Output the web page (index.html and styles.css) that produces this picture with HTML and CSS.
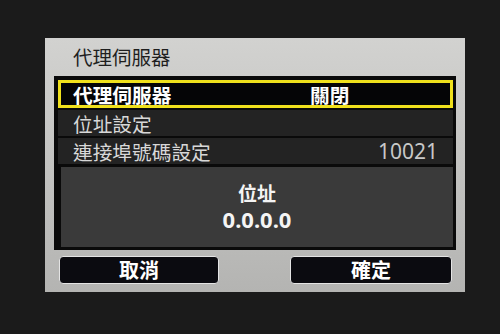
FILE: index.html
```html
<!DOCTYPE html>
<html lang="zh-Hant">
<head>
    <meta charset="UTF-8">
    <title>代理伺服器</title>
    <link rel="stylesheet" href="styles.css">
</head>
<body>
    <div class="screen">
        <div class="title">代理伺服器</div>
        <div class="frame">
            <div class="row selected">
                <span class="label">代理伺服器</span>
                <span class="value">關閉</span>
            </div>
            <div class="row">
                <span class="label">位址設定</span>
            </div>
            <div class="row">
                <span class="label">連接埠號碼設定</span>
                <span class="num">10021</span>
            </div>
            <div class="info">
                <div class="info-title">位址</div>
                <div class="info-value">0.0.0.0</div>
            </div>
        </div>
        <div class="buttons">
            <div class="btn">取消</div>
            <div class="btn">確定</div>
        </div>
    </div>
</body>
</html>
```

FILE: styles.css
```css
* {
    box-sizing: border-box;
    margin: 0;
    padding: 0;
}
body {
    background-color: #1b1b1b;
    font-family: 'Noto Sans CJK TC', 'Noto Sans', sans-serif;
    width: 500px;
    height: 334px;
    overflow: hidden;
}
.screen {
    margin: 38px 0 0 45px;
    width: 420px;
    height: 254px;
    background: linear-gradient(#d2d2d0, #b4b4b2);
    padding: 0 9px;
    display: flex;
    flex-direction: column;
}
.title {
    height: 38px;
    padding-left: 19px;
    font-size: 19.5px;
    line-height: 38px;
    color: #1e1e1e;
}
.frame {
    background-color: #0a0a0a;
    padding: 4px 3px 3px 4px;
    height: 174px;
    display: flex;
    flex-direction: column;
    gap: 2px;
}
.row {
    height: 26px;
    background-color: #232323;
    display: flex;
    align-items: center;
    padding: 0 15px 0 15px;
    color: #d8d8d8;
    font-size: 19.7px;
}
.row.selected {
    height: 28px;
    background-color: #050506;
    border: 3px solid #f0e11c;
    padding-left: 12px;
    color: #ffffff;
    font-weight: bold;
}
.label {
    width: 237px;
}
.num {
    margin-left: auto;
    font-family: 'Noto Sans', sans-serif;
    font-size: 21px;
    color: #c8c8c8;
}
.info {
    flex: 1;
    margin-top: 1px;
    margin-left: 3px;
    background-color: #3a3a3a;
    display: flex;
    flex-direction: column;
    align-items: center;
    justify-content: center;
    color: #f4f4f4;
    font-weight: bold;
}
.info-title {
    font-size: 19px;
    line-height: 24px;
}
.info-value {
    font-family: 'Noto Sans', sans-serif;
    font-size: 22px;
    line-height: 28px;
}
.buttons {
    display: flex;
    justify-content: space-between;
    margin-top: 6px;
    padding: 0 4px 0 5px;
}
.btn {
    width: 160px;
    height: 28px;
    background-color: #0b0b10;
    border: 1.5px solid #e4e4e4;
    border-radius: 4px;
    color: #ffffff;
    font-weight: bold;
    font-size: 20px;
    text-align: center;
    line-height: 25px;
}
.btn:last-child {
    width: 162px;
}
```
